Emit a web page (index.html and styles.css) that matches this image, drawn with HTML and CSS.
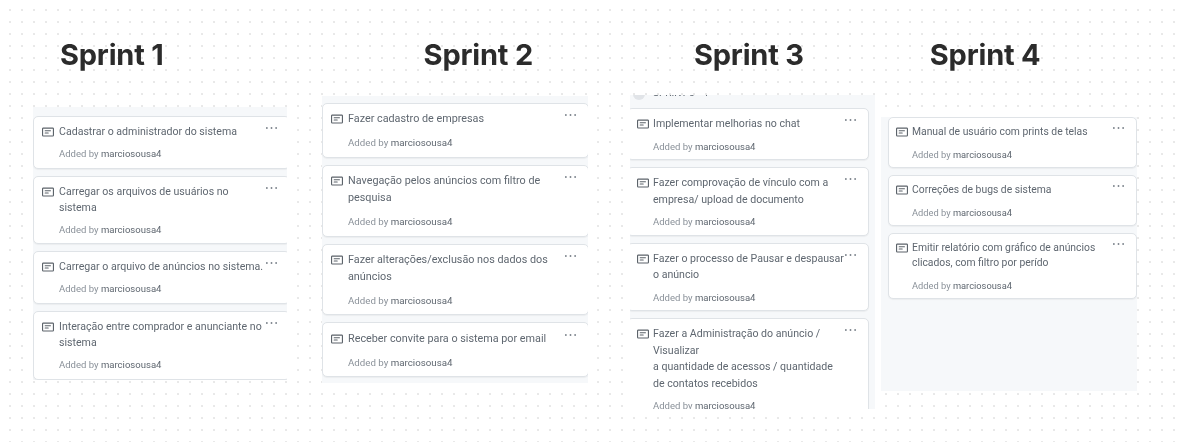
FILE: index.html
```html
<!DOCTYPE html>
<html lang="pt-BR">
<head>
  <meta charset="UTF-8">
  <meta name="viewport" content="width=device-width, initial-scale=1.0">
  <title>Sprints</title>
  <link rel="stylesheet" href="styles.css">
</head>
<body>
  <svg class="icon-defs" aria-hidden="true">
    <symbol id="note" viewBox="0 0 16 16">
      <path d="M0 3.75C0 2.784.784 2 1.75 2h12.5c.966 0 1.75.784 1.75 1.75v8.5A1.75 1.75 0 0 1 14.25 14H1.75A1.75 1.75 0 0 1 0 12.25Zm1.75-.25a.25.25 0 0 0-.25.25v8.5c0 .138.112.25.25.25h12.5a.25.25 0 0 0 .25-.25v-8.5a.25.25 0 0 0-.25-.25ZM3.5 6.25a.75.75 0 0 1 .75-.75h7a.75.75 0 0 1 0 1.5h-7a.75.75 0 0 1-.75-.75Zm.75 2.25h4a.75.75 0 0 1 0 1.5h-4a.75.75 0 0 1 0-1.5Z"/>
    </symbol>
    <symbol id="kebab" viewBox="0 0 14 4">
      <circle cx="2" cy="2" r="1"/><circle cx="7" cy="2" r="1"/><circle cx="12" cy="2" r="1"/>
    </symbol>
  </svg>

  <div class="page">
    <header class="titles">
      <h1 class="title title-1">Sprint 1</h1>
      <h1 class="title title-2">Sprint 2</h1>
      <h1 class="title title-3">Sprint 3</h1>
      <h1 class="title title-4">Sprint 4</h1>
    </header>

    <main class="board">
      <section class="column column-1">
        <article class="card">
          <svg class="note"><use href="#note"/></svg>
          <div class="card-body">
            <p class="card-title">Cadastrar o administrador do sistema</p>
            <p class="card-meta">Added by <span>marciosousa4</span></p>
          </div>
          <svg class="menu"><use href="#kebab"/></svg>
        </article>
        <article class="card">
          <svg class="note"><use href="#note"/></svg>
          <div class="card-body">
            <p class="card-title">Carregar os arquivos de usuários no sistema</p>
            <p class="card-meta">Added by <span>marciosousa4</span></p>
          </div>
          <svg class="menu"><use href="#kebab"/></svg>
        </article>
        <article class="card">
          <svg class="note"><use href="#note"/></svg>
          <div class="card-body">
            <p class="card-title">Carregar o arquivo de anúncios no sistema.</p>
            <p class="card-meta">Added by <span>marciosousa4</span></p>
          </div>
          <svg class="menu"><use href="#kebab"/></svg>
        </article>
        <article class="card">
          <svg class="note"><use href="#note"/></svg>
          <div class="card-body">
            <p class="card-title">Interação entre comprador e anunciante no sistema</p>
            <p class="card-meta">Added by <span>marciosousa4</span></p>
          </div>
          <svg class="menu"><use href="#kebab"/></svg>
        </article>
      </section>

      <section class="column column-2">
        <article class="card">
          <svg class="note"><use href="#note"/></svg>
          <div class="card-body">
            <p class="card-title">Fazer cadastro de empresas</p>
            <p class="card-meta">Added by <span>marciosousa4</span></p>
          </div>
          <svg class="menu"><use href="#kebab"/></svg>
        </article>
        <article class="card">
          <svg class="note"><use href="#note"/></svg>
          <div class="card-body">
            <p class="card-title">Navegação pelos anúncios com filtro de pesquisa</p>
            <p class="card-meta">Added by <span>marciosousa4</span></p>
          </div>
          <svg class="menu"><use href="#kebab"/></svg>
        </article>
        <article class="card">
          <svg class="note"><use href="#note"/></svg>
          <div class="card-body">
            <p class="card-title">Fazer alterações/exclusão nos dados dos anúncios</p>
            <p class="card-meta">Added by <span>marciosousa4</span></p>
          </div>
          <svg class="menu"><use href="#kebab"/></svg>
        </article>
        <article class="card">
          <svg class="note"><use href="#note"/></svg>
          <div class="card-body">
            <p class="card-title">Receber convite para o sistema por email</p>
            <p class="card-meta">Added by <span>marciosousa4</span></p>
          </div>
          <svg class="menu"><use href="#kebab"/></svg>
        </article>
      </section>

      <section class="column column-3">
        <div class="peek">
          <span class="peek-dot"></span>
          <span class="peek-text">SPRINT 3 · 4</span>
        </div>
        <article class="card">
          <svg class="note"><use href="#note"/></svg>
          <div class="card-body">
            <p class="card-title">Implementar melhorias no chat</p>
            <p class="card-meta">Added by <span>marciosousa4</span></p>
          </div>
          <svg class="menu"><use href="#kebab"/></svg>
        </article>
        <article class="card">
          <svg class="note"><use href="#note"/></svg>
          <div class="card-body">
            <p class="card-title">Fazer comprovação de vínculo com a empresa/ upload de documento</p>
            <p class="card-meta">Added by <span>marciosousa4</span></p>
          </div>
          <svg class="menu"><use href="#kebab"/></svg>
        </article>
        <article class="card">
          <svg class="note"><use href="#note"/></svg>
          <div class="card-body">
            <p class="card-title">Fazer o processo de Pausar e despausar o anúncio</p>
            <p class="card-meta">Added by <span>marciosousa4</span></p>
          </div>
          <svg class="menu"><use href="#kebab"/></svg>
        </article>
        <article class="card">
          <svg class="note"><use href="#note"/></svg>
          <div class="card-body">
            <p class="card-title">Fazer a Administração do anúncio / Visualizar<br>a quantidade de acessos / quantidade<br>de contatos recebidos</p>
            <p class="card-meta">Added by <span>marciosousa4</span></p>
          </div>
          <svg class="menu"><use href="#kebab"/></svg>
        </article>
      </section>

      <section class="column column-4">
        <article class="card">
          <svg class="note"><use href="#note"/></svg>
          <div class="card-body">
            <p class="card-title">Manual de usuário com prints de telas</p>
            <p class="card-meta">Added by <span>marciosousa4</span></p>
          </div>
          <svg class="menu"><use href="#kebab"/></svg>
        </article>
        <article class="card">
          <svg class="note"><use href="#note"/></svg>
          <div class="card-body">
            <p class="card-title">Correções de bugs de sistema</p>
            <p class="card-meta">Added by <span>marciosousa4</span></p>
          </div>
          <svg class="menu"><use href="#kebab"/></svg>
        </article>
        <article class="card">
          <svg class="note"><use href="#note"/></svg>
          <div class="card-body">
            <p class="card-title">Emitir relatório com gráfico de anúncios clicados, com filtro por perído</p>
            <p class="card-meta">Added by <span>marciosousa4</span></p>
          </div>
          <svg class="menu"><use href="#kebab"/></svg>
        </article>
      </section>
    </main>
  </div>
</body>
</html>
```

FILE: styles.css
```css
html, body {
  margin: 0;
  padding: 0;
}

body {
  width: 1183px;
  height: 442px;
  overflow: hidden;
  background-color: #fff;
  font-family: Roboto, "Liberation Sans", sans-serif;
}

.icon-defs {
  display: none;
}

.page {
  height: 442px;
  background-image: radial-gradient(circle, #e8e8e8 0.7px, transparent 1.1px);
  background-size: 12px 12px;
  background-position: 4px 4px;
  filter: blur(0.35px);
}

/* headings */
.titles {
  display: flex;
  height: 95px;
  box-sizing: border-box;
  padding-top: 37px;
  font-family: Inter, "Liberation Sans", sans-serif;
}

.title {
  margin: 0;
  font-size: 29px;
  line-height: 36px;
  font-weight: 700;
  letter-spacing: -0.2px;
  color: #2b2b2b;
}

.title-1 { margin-left: 60px; }
.title-2 { margin-left: 260px; }
.title-3 { margin-left: 161px; }
.title-4 { margin-left: 126px; }

/* columns */
.board {
  display: flex;
  align-items: flex-start;
  padding-left: 33px;
}

.column {
  flex: none;
  overflow: hidden;
  box-sizing: border-box;
  background-color: #f6f8fa;
  display: flex;
  flex-direction: column;
  gap: 7px;
}

.column-1 {
  width: 254px;
  height: 273px;
  margin-top: 12px;
  padding-top: 9px;
  font-size: 10.6px;
}

.column-2 {
  width: 266px;
  height: 287px;
  margin-top: 1px;
  margin-left: 35px;
  padding-top: 7px;
  font-size: 10.8px;
}

.column-3 {
  width: 245px;
  height: 314px;
  margin-left: 42px;
  font-size: 10.6px;
}

.column-4 {
  width: 256px;
  height: 274px;
  margin-top: 22px;
  margin-left: 6px;
  padding-left: 7px;
  gap: 6.5px;
  font-size: 10.35px;
}

.peek {
  height: 6px;
  display: flex;
  gap: 8px;
  overflow: hidden;
  flex: none;
}

.peek-dot {
  flex: none;
  width: 12px;
  height: 12px;
  margin: -7px 0 0 3px;
  border-radius: 50%;
  background-color: #e1e4e8;
}

.peek-text {
  margin-top: -8px;
  font-size: 10px;
  line-height: 12px;
  color: #57606a;
}

/* cards */
.card {
  flex: none;
  display: flex;
  box-sizing: border-box;
  background-color: #fff;
  border: 1px solid #dfe3e7;
  border-radius: 5px;
  box-shadow: 0 1px 1px rgba(31, 35, 40, 0.05);
  padding: 0.66em 11px 0.6em 8px;
}

.column-1 .card { width: 257px; }
.column-2 .card { width: 267px; padding-bottom: 0.55em; }
.column-3 .card { width: 242px; margin-left: -3px; padding-left: 9px; padding-bottom: 0.5em; }
.column-4 .card { width: 249px; padding: 0.6em 11px 0.5em 7px; }

.note {
  flex: none;
  width: 12px;
  height: 12px;
  margin-top: 0.2em;
  margin-right: 5px;
  fill: #5c636a;
}

.column-3 .note,
.column-4 .note {
  margin-right: 4px;
}

.card-body {
  flex: 1;
  min-width: 0;
}

.card-title {
  margin: 0;
  line-height: 1.5em;
  color: #5f6770;
}

.column-2 .card-title { line-height: 1.57em; }
.column-3 .card-title { line-height: 1.55em; }

.card-meta {
  margin: 0.75em 0 0;
  font-size: 0.9em;
  line-height: 1.5em;
  color: #8a9199;
}

.column-2 .card-meta { margin-top: 0.85em; }
.column-4 .card-meta { margin-top: 0.9em; }

.card-meta span {
  color: #5f6770;
}

.menu {
  flex: none;
  width: 13px;
  height: 4px;
  margin-top: 0.18em;
  fill: #7a828a;
}

/* the long title in this column runs right up to the dots */
.column-3 .menu {
  margin-left: -4px;
}
```
